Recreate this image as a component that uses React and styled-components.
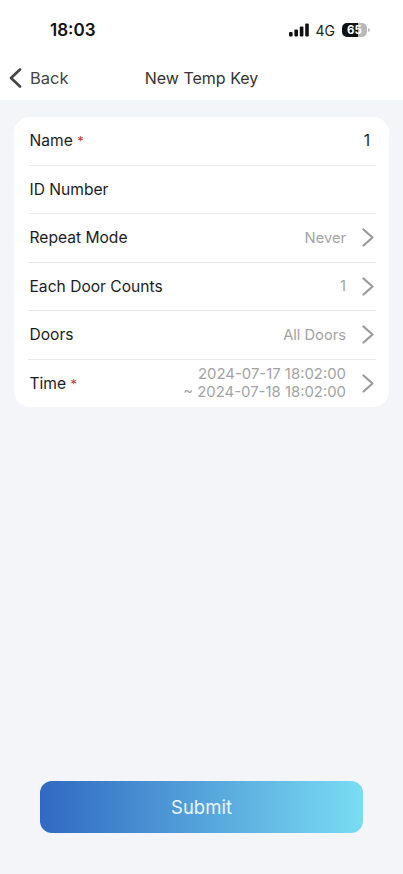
import { createGlobalStyle } from "styled-components";
import styled from "styled-components";

const GlobalStyle = createGlobalStyle`
  html, body {
    margin: 0;
    padding: 0;
    background: #f3f5f9;
    font-family: Inter, "Liberation Sans", sans-serif;
  }
`;

const Page = styled.div`
  width: 403px;
  height: 874px;
  display: flex;
  flex-direction: column;
  background: #f3f5f9;
  overflow: hidden;
`;

const Header = styled.header`
  height: 100px;
  flex: none;
  background: #fff;
  display: flex;
  flex-direction: column;
`;

const StatusBar = styled.div`
  height: 56px;
  padding: 4px 36px 0 50px;
  box-sizing: border-box;
  display: flex;
  align-items: center;
  justify-content: space-between;
`;

const Clock = styled.span`
  font-size: 17px;
  font-weight: 600;
  color: #111;
`;

const StatusIcons = styled.div`
  display: flex;
  align-items: center;
  gap: 7px;
`;

const Network = styled.span`
  font-size: 14px;
  color: #222;
`;

const Battery = styled.div`
  width: 25px;
  height: 14px;
  border-radius: 5px;
  font-size: 11.5px;
  font-weight: 700;
  line-height: 14px;
  text-align: center;
  color: #fff;
  background: linear-gradient(90deg, #111 0 65%, #b9b9b9 65% 100%);
  position: relative;

  &::after {
    content: "";
    position: absolute;
    right: -3px;
    top: 5px;
    width: 2px;
    height: 4px;
    border-radius: 0 2px 2px 0;
    background: #c4c4c4;
  }
`;

const NavBar = styled.nav`
  height: 44px;
  position: relative;
  display: flex;
  align-items: center;
  justify-content: center;
`;

const Back = styled.div`
  position: absolute;
  left: 9px;
  top: 12px;
  display: flex;
  align-items: center;
  gap: 8px;
  font-size: 16.5px;
  color: #444;
`;

const Title = styled.h1`
  margin: 0;
  font-size: 16px;
  font-weight: 400;
  color: #333;
`;

const Card = styled.section`
  margin: 17px 14px 0;
  padding: 0 13px 0 14px;
  background: #fff;
  border-radius: 16px;
`;

const Row = styled.div`
  height: ${(p) => (p.$last ? "47px" : "48.5px")};
  box-sizing: border-box;
  display: flex;
  align-items: center;
  gap: 16px;
  border-bottom: ${(p) => (p.$last ? "none" : "1px solid #e9e9ec")};
`;

const Label = styled.span`
  font-size: 15.6px;
  color: #1c1c1e;
  flex: 1;
  padding-left: 1.5px;
`;

const Required = styled.span`
  color: #c9302c;
  font-size: 13px;
`;

const Value = styled.span`
  font-size: ${(p) => (p.$dark ? "15.6px" : "14.7px")};
  line-height: 18px;
  text-align: right;
  white-space: nowrap;
  color: ${(p) => (p.$dark ? "#1c1c1e" : "#a3a3a6")};
  padding-right: ${(p) => (p.$dark ? "6px" : "0")};
`;

const DateValue = styled(Value)`
  font-size: 14.9px;
`;

const Footer = styled.div`
  margin-top: auto;
  padding: 0 40px 41px;
`;

const Submit = styled.button`
  width: 100%;
  height: 52px;
  border: none;
  border-radius: 12px;
  background: linear-gradient(90deg, #3069c2 0%, #79ddf3 100%);
  color: #eaf7fd;
  font-family: inherit;
  font-size: 18.5px;
`;

const ChevronIcon = styled.svg`
  flex: none;
  margin-right: 2px;
`;

const Chevron = () => (
  <ChevronIcon width="12" height="19" viewBox="0 0 12 19" fill="none">
    <path d="M1.5 1.5 L10.5 9.5 L1.5 17.5" stroke="#9a9a9d" strokeWidth="2.2" strokeLinecap="round" strokeLinejoin="round" />
  </ChevronIcon>
);

const BackArrow = () => (
  <svg width="13" height="20" viewBox="0 0 13 20" fill="none">
    <path d="M11 1.5 L2 10 L11 18.5" stroke="#444" strokeWidth="2.6" strokeLinecap="round" strokeLinejoin="round" />
  </svg>
);

const Signal = () => (
  <svg width="20" height="14" viewBox="0 0 20 14">
    <rect x="0" y="9" width="3.6" height="4.5" rx="1" fill="#111" />
    <rect x="5.4" y="6.5" width="3.6" height="7" rx="1" fill="#111" />
    <rect x="10.8" y="3.5" width="3.6" height="10" rx="1" fill="#111" />
    <rect x="16.2" y="0.5" width="3.6" height="13" rx="1" fill="#111" />
  </svg>
);

export default function App() {
  return (
    <Page>
      <GlobalStyle />
      <Header>
        <StatusBar>
          <Clock>18:03</Clock>
          <StatusIcons>
            <Signal />
            <Network>4G</Network>
            <Battery>65</Battery>
          </StatusIcons>
        </StatusBar>
        <NavBar>
          <Back>
            <BackArrow />
            Back
          </Back>
          <Title>New Temp Key</Title>
        </NavBar>
      </Header>
      <Card>
        <Row>
          <Label>Name <Required>*</Required></Label>
          <Value $dark>1</Value>
        </Row>
        <Row>
          <Label>ID Number</Label>
        </Row>
        <Row>
          <Label>Repeat Mode</Label>
          <Value>Never</Value>
          <Chevron />
        </Row>
        <Row>
          <Label>Each Door Counts</Label>
          <Value>1</Value>
          <Chevron />
        </Row>
        <Row>
          <Label>Doors</Label>
          <Value>All Doors</Value>
          <Chevron />
        </Row>
        <Row $last>
          <Label>Time <Required>*</Required></Label>
          <DateValue>
            2024-07-17 18:02:00
            <br />~ 2024-07-18 18:02:00
          </DateValue>
          <Chevron />
        </Row>
      </Card>
      <Footer>
        <Submit>Submit</Submit>
      </Footer>
    </Page>
  );
}
